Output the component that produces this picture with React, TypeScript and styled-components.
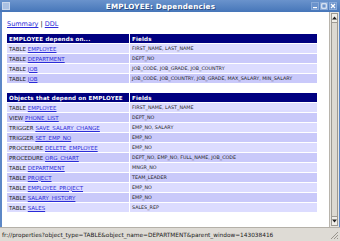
import React from 'react';
import styled, { createGlobalStyle } from 'styled-components';

const GlobalStyle = createGlobalStyle`
  html, body {
    margin: 0;
    padding: 0;
    width: 340px;
    height: 241px;
    overflow: hidden;
    background: #d4d0c8;
  }
  body {
    font-family: "DejaVu Sans", Verdana, sans-serif;
  }
`;

const dependsOn = [
  { kind: 'TABLE', name: 'EMPLOYEE', fields: 'FIRST_NAME, LAST_NAME' },
  { kind: 'TABLE', name: 'DEPARTMENT', fields: 'DEPT_NO' },
  { kind: 'TABLE', name: 'JOB', fields: 'JOB_CODE, JOB_GRADE, JOB_COUNTRY' },
  { kind: 'TABLE', name: 'JOB', fields: 'JOB_CODE, JOB_COUNTRY, JOB_GRADE, MAX_SALARY, MIN_SALARY' },
];

const dependents = [
  { kind: 'TABLE', name: 'EMPLOYEE', fields: 'FIRST_NAME, LAST_NAME' },
  { kind: 'VIEW', name: 'PHONE_LIST', fields: 'DEPT_NO' },
  { kind: 'TRIGGER', name: 'SAVE_SALARY_CHANGE', fields: 'EMP_NO, SALARY' },
  { kind: 'TRIGGER', name: 'SET_EMP_NO', fields: 'EMP_NO' },
  { kind: 'PROCEDURE', name: 'DELETE_EMPLOYEE', fields: 'EMP_NO' },
  { kind: 'PROCEDURE', name: 'ORG_CHART', fields: 'DEPT_NO, EMP_NO, FULL_NAME, JOB_CODE' },
  { kind: 'TABLE', name: 'DEPARTMENT', fields: 'MNGR_NO' },
  { kind: 'TABLE', name: 'PROJECT', fields: 'TEAM_LEADER' },
  { kind: 'TABLE', name: 'EMPLOYEE_PROJECT', fields: 'EMP_NO' },
  { kind: 'TABLE', name: 'SALARY_HISTORY', fields: 'EMP_NO' },
  { kind: 'TABLE', name: 'SALES', fields: 'SALES_REP' },
];

const Window = styled.div`
  width: 340px;
  height: 241px;
  display: flex;
  flex-direction: column;
  background: #d4d0c8;
`;

const TitleBar = styled.div`
  height: 12px;
  flex: none;
  display: flex;
  align-items: center;
  padding: 0 3px 0 2px;
  background: linear-gradient(#6a93cc, #4676b9);
  color: #ffffff;
`;

const MenuBox = styled.div`
  width: 6px;
  height: 6px;
  border: 1px solid #c9d7ec;
  background: #a9c0e2;
`;

const Title = styled.div`
  flex: 1;
  text-align: center;
  font-weight: bold;
  font-size: 7.2px;
  letter-spacing: 0.2px;
  text-shadow: 1px 1px 0 #2d4f85;
`;

const Buttons = styled.div`
  display: flex;
  gap: 1px;
`;

const WinButton = styled.div`
  width: 8px;
  height: 8px;
  display: flex;
  align-items: center;
  justify-content: center;
  background: #6b93cc;
  border: 1px solid #88a9d8;
  box-sizing: border-box;
`;

const Middle = styled.div`
  flex: 1;
  display: flex;
  min-height: 0;
  border-left: 2px solid #5c87c6;
  border-right: 1px solid #5c87c6;
`;

const Content = styled.div`
  flex: 1;
  background: #ffffff;
  padding: 8px 0 0 5px;
  overflow: hidden;
`;

const NavLinks = styled.div`
  font-size: 6.5px;
  color: #000;
  margin-bottom: 5px;
`;

const Link = styled.a`
  color: #2b2bd8;
  text-decoration: underline;
`;

const Table = styled.table`
  width: 310px;
  border-collapse: separate;
  border-spacing: 0 1px;
  margin-bottom: 8px;
  table-layout: fixed;
`;

const HeadCell = styled.th<{ $w?: number }>`
  background: #000080;
  color: #ffffff;
  font-size: 5.6px;
  font-weight: bold;
  text-align: left;
  height: 9px;
  padding: 0 2px;
  letter-spacing: 0.15px;
  border-right: ${(p) => (p.$w ? '1px solid #ffffff' : 'none')};
  width: ${(p) => (p.$w ? `${p.$w}px` : 'auto')};
  white-space: nowrap;
  overflow: hidden;
`;

const Row = styled.tr<{ $odd: boolean }>`
  background: ${(p) => (p.$odd ? '#c9c9fa' : '#dcdcff')};
`;

const KindCell = styled.td`
  font-size: 5.5px;
  color: #222;
  height: 9px;
  padding: 0 2px;
  border-right: 1px solid #ffffff;
  white-space: nowrap;
`;

const FieldCell = styled.td`
  font-size: 4.8px;
  color: #222;
  padding: 0 2px;
  white-space: nowrap;
`;

const Scrollbar = styled.div`
  width: 10px;
  flex: none;
  background: #e8e6e1;
  border-left: 1px solid #b8b4ac;
  display: flex;
  flex-direction: column;
  padding: 1px 0;
  box-sizing: border-box;
`;

const Arrow = styled.div`
  height: 8px;
  display: flex;
  align-items: center;
  justify-content: center;
  background: #f0eee9;
  border: 1px solid #9d9a93;
  margin: 0 1px;
`;

const Thumb = styled.div`
  flex: 1;
  margin: 0 1px;
  background: #dcd9d2;
  border: 1px solid #9d9a93;
  border-top: none;
  border-bottom: none;
`;

const StatusBar = styled.div`
  height: 13px;
  flex: none;
  display: flex;
  align-items: center;
  padding-left: 2px;
  border-top: 1px solid #b4b0a8;
  font-size: 5.8px;
  color: #222;
  background: #dedbd5;
  position: relative;
`;

const Grip = styled.svg`
  position: absolute;
  right: 1px;
  bottom: 1px;
`;

const DepTable = ({ title, rows }: { title: string; rows: typeof dependsOn }) => (
  <Table>
    <thead>
      <tr>
        <HeadCell $w={118}>{title}</HeadCell>
        <HeadCell>Fields</HeadCell>
      </tr>
    </thead>
    <tbody>
      {rows.map((r, i) => (
        <Row key={i} $odd={i % 2 === 1}>
          <KindCell>
            {r.kind} <Link href="#">{r.name}</Link>
          </KindCell>
          <FieldCell>{r.fields}</FieldCell>
        </Row>
      ))}
    </tbody>
  </Table>
);

export default function App() {
  return (
    <Window>
      <GlobalStyle />
      <TitleBar>
        <MenuBox />
        <Title>EMPLOYEE: Dependencies</Title>
        <Buttons>
          <WinButton>
            <svg width="6" height="6" viewBox="0 0 6 6"><rect x="1" y="4" width="4" height="1.2" fill="#fff" /></svg>
          </WinButton>
          <WinButton>
            <svg width="6" height="6" viewBox="0 0 6 6"><rect x="0.8" y="0.8" width="4.4" height="4.4" fill="none" stroke="#fff" strokeWidth="1" /></svg>
          </WinButton>
          <WinButton>
            <svg width="6" height="6" viewBox="0 0 6 6"><path d="M1 1L5 5M5 1L1 5" stroke="#fff" strokeWidth="1.2" /></svg>
          </WinButton>
        </Buttons>
      </TitleBar>
      <Middle>
        <Content>
          <NavLinks>
            <Link href="#">Summary</Link> | <Link href="#">DDL</Link>
          </NavLinks>
          <DepTable title="EMPLOYEE depends on..." rows={dependsOn} />
          <DepTable title="Objects that depend on EMPLOYEE" rows={dependents} />
        </Content>
        <Scrollbar>
          <Arrow>
            <svg width="5" height="4" viewBox="0 0 5 4"><path d="M0 3.5L2.5 0.5L5 3.5Z" fill="#222" /></svg>
          </Arrow>
          <Thumb />
          <Arrow>
            <svg width="5" height="4" viewBox="0 0 5 4"><path d="M0 0.5L2.5 3.5L5 0.5Z" fill="#222" /></svg>
          </Arrow>
        </Scrollbar>
      </Middle>
      <StatusBar>
        fr://properties?object_type=TABLE&amp;object_name=DEPARTMENT&amp;parent_window=143038416
        <Grip width="10" height="10" viewBox="0 0 10 10">
          <path d="M9 2L2 9M9 5L5 9M9 8L8 9" stroke="#9a968e" strokeWidth="1" />
        </Grip>
      </StatusBar>
    </Window>
  );
}
